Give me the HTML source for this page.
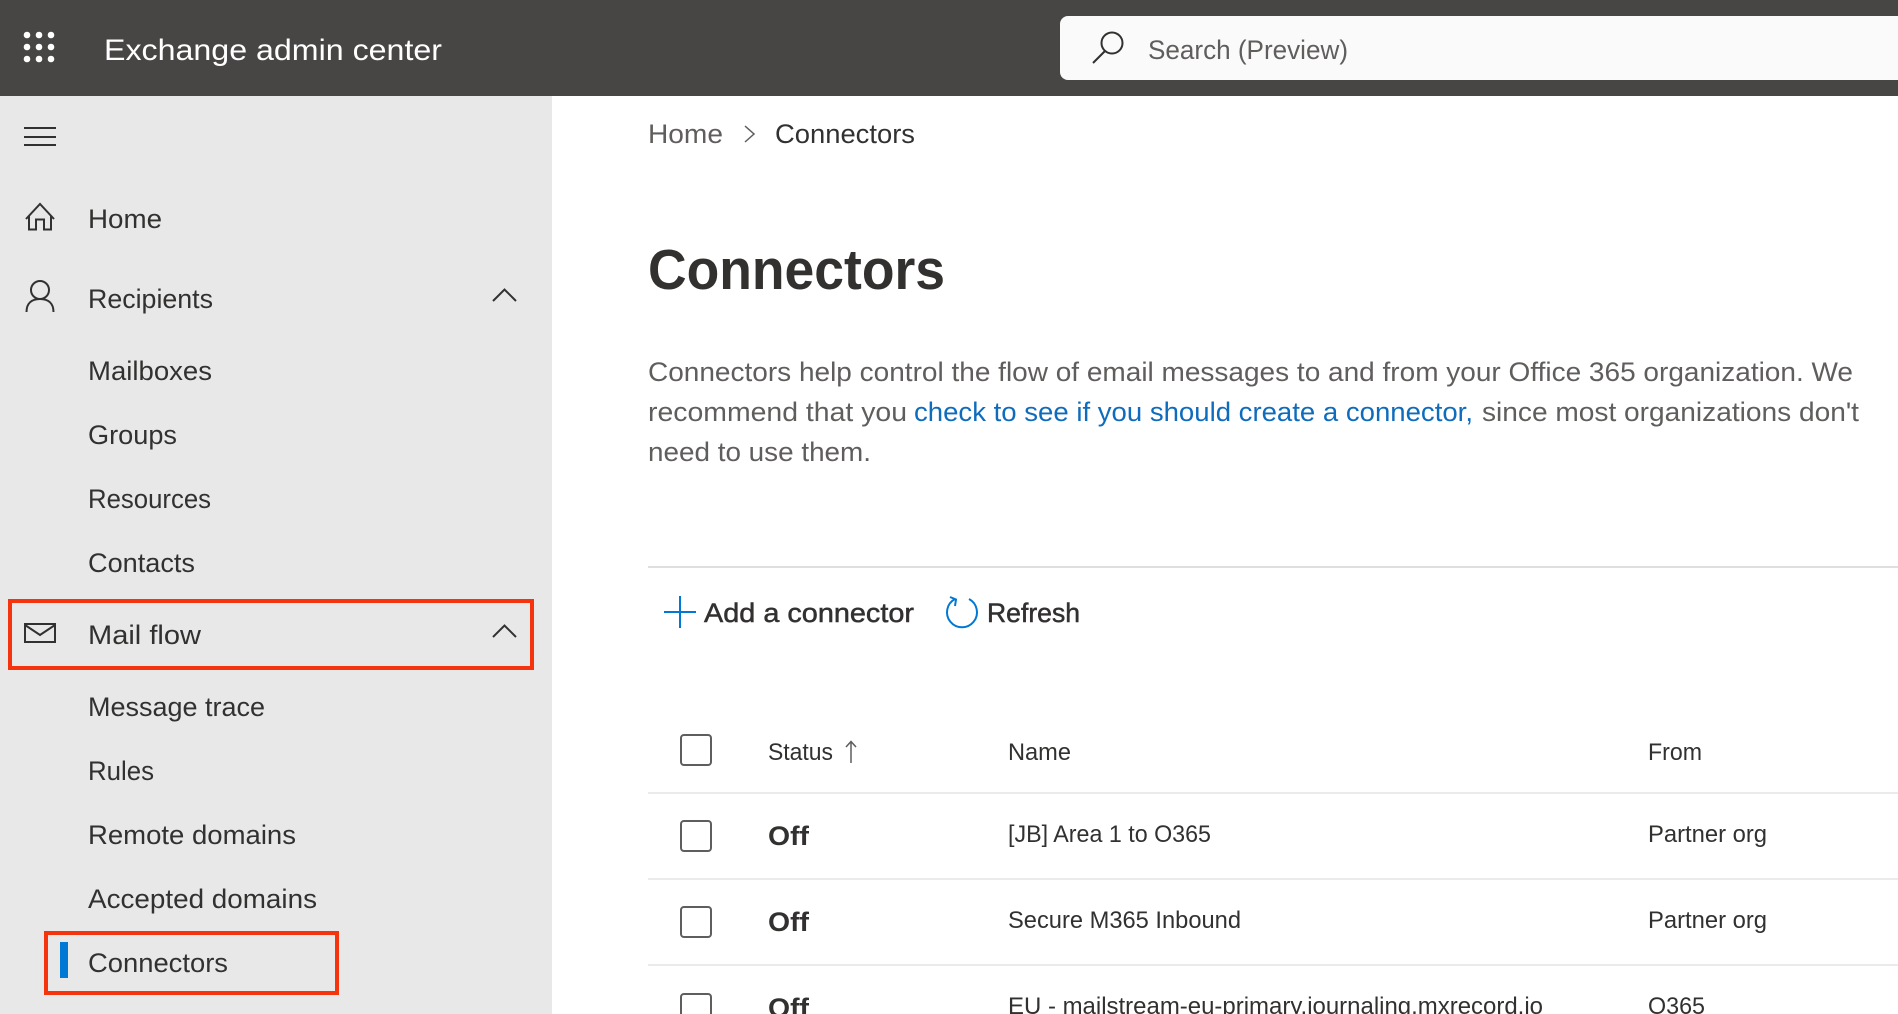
<!DOCTYPE html>
<html lang="en"><head><meta charset="utf-8"><title>Exchange admin center</title>
<style>
html,body{margin:0;padding:0;background:#fff;width:1898px;height:1014px;overflow:hidden}
svg{display:block;overflow:hidden}
text{font-family:"Liberation Sans",sans-serif;fill:#323130}
.n{font-size:27px}
.t{font-size:24px}
.s{font-size:27px;stroke:#323130;stroke-width:.5px}
.p{font-size:27px;fill:#605e5c}
.i{fill:none;stroke:#323130;stroke-width:2}
</style></head><body>
<svg width="1898" height="1014" viewBox="0 0 1898 1014" xmlns="http://www.w3.org/2000/svg">
<rect width="1898" height="1014" fill="#fff"/>
<rect width="552" height="918" y="96" fill="#e8e8e8"/>
<rect width="1898" height="96" fill="#484644"/>
<g fill="#fff"><circle cx="27" cy="35" r="3.3"/><circle cx="39" cy="35" r="3.3"/><circle cx="51" cy="35" r="3.3"/><circle cx="27" cy="47" r="3.3"/><circle cx="39" cy="47" r="3.3"/><circle cx="51" cy="47" r="3.3"/><circle cx="27" cy="59" r="3.3"/><circle cx="39" cy="59" r="3.3"/><circle cx="51" cy="59" r="3.3"/></g>
<text x="104" y="60" font-size="30" style="fill:#fff" textLength="338" lengthAdjust="spacingAndGlyphs">Exchange admin center</text>
<path d="M1068 16H1898V80H1068a8 8 0 0 1-8-8V24a8 8 0 0 1 8-8z" fill="#fafafa"/>
<circle cx="1112" cy="43" r="10.500" class="i"/><path d="M1105 51L1093 63" class="i"/>
<text x="1148" y="59" font-size="27" style="fill:#605e5c" textLength="200" lengthAdjust="spacingAndGlyphs">Search (Preview)</text>

<path d="M24 128H56M24 137H56M24 145H56" class="i"/>
<path d="M26 219L40 204L54 219M29 216V229.5H36V219.5H44V229.5H51V216" class="i"/>
<circle cx="40" cy="290" r="9" class="i"/><path d="M26.5 312C26.5 303 32 299 40 299C48 299 53.500 303 53.500 312" class="i"/>
<path d="M493 301L504.500 289.500L516 301" class="i"/>
<rect x="25" y="624" width="30" height="18" class="i"/><path d="M25 625L40 635L55 625" class="i"/>
<path d="M493 637L504.500 625.500L516 637" class="i"/>

<text class="n" x="88" y="228" textLength="74" lengthAdjust="spacingAndGlyphs">Home</text>
<text class="n" x="88" y="308" textLength="125" lengthAdjust="spacingAndGlyphs">Recipients</text>
<text class="n" x="88" y="380" textLength="124" lengthAdjust="spacingAndGlyphs">Mailboxes</text>
<text class="n" x="88" y="444" textLength="89" lengthAdjust="spacingAndGlyphs">Groups</text>
<text class="n" x="88" y="508" textLength="123" lengthAdjust="spacingAndGlyphs">Resources</text>
<text class="n" x="88" y="572" textLength="107" lengthAdjust="spacingAndGlyphs">Contacts</text>
<text class="n" x="88" y="644" textLength="113" lengthAdjust="spacingAndGlyphs">Mail flow</text>
<text class="n" x="88" y="716" textLength="177" lengthAdjust="spacingAndGlyphs">Message trace</text>
<text class="n" x="88" y="780" textLength="66" lengthAdjust="spacingAndGlyphs">Rules</text>
<text class="n" x="88" y="844" textLength="208" lengthAdjust="spacingAndGlyphs">Remote domains</text>
<text class="n" x="88" y="908" textLength="229" lengthAdjust="spacingAndGlyphs">Accepted domains</text>
<text class="n" x="88" y="972" textLength="140" lengthAdjust="spacingAndGlyphs">Connectors</text>

<rect x="10" y="601" width="522" height="67" fill="none" stroke="#f5330c" stroke-width="4"/>
<rect x="46" y="933" width="291" height="60" fill="none" stroke="#f5330c" stroke-width="4"/>
<rect x="60" y="942" width="8" height="36" fill="#0078d4"/>

<text x="648" y="143" font-size="27" style="fill:#605e5c" textLength="75" lengthAdjust="spacingAndGlyphs">Home</text>
<path d="M745 126L754 134L745 142" fill="none" stroke="#605e5c" stroke-width="1.500"/>
<text class="n" x="775" y="143" textLength="140" lengthAdjust="spacingAndGlyphs">Connectors</text>
<text x="648" y="289" font-size="57" font-weight="700" textLength="297" lengthAdjust="spacingAndGlyphs">Connectors</text>

<text class="p" x="648" y="381" textLength="1205" lengthAdjust="spacingAndGlyphs">Connectors help control the flow of email messages to and from your Office 365 organization. We</text>
<text class="p" x="648" y="421" textLength="259" lengthAdjust="spacingAndGlyphs">recommend that you</text>
<text class="p" x="914" y="421" style="fill:#0f6cbd" textLength="559" lengthAdjust="spacingAndGlyphs">check to see if you should create a connector,</text>
<text class="p" x="1482" y="421" textLength="377" lengthAdjust="spacingAndGlyphs">since most organizations don't</text>
<text class="p" x="648" y="461" textLength="223" lengthAdjust="spacingAndGlyphs">need to use them.</text>

<rect x="648" y="566" width="1250" height="2" fill="#e1dfdd"/>
<path d="M664 612H696M680 596V628" fill="none" stroke="#0078d4" stroke-width="2"/>
<text class="s" x="704" y="622" textLength="210" lengthAdjust="spacingAndGlyphs">Add a connector</text>
<path d="M969 599A15 15 0 1 1 955 599" fill="none" stroke="#0078d4" stroke-width="2"/>
<path d="M950 597L956 599.500L955 606" fill="none" stroke="#0078d4" stroke-width="2"/>
<text class="s" x="987" y="622" textLength="93" lengthAdjust="spacingAndGlyphs">Refresh</text>

<g fill="none" stroke="#605e5c" stroke-width="2">
<rect x="681" y="735" width="30" height="30" rx="3"/>
<rect x="681" y="821" width="30" height="30" rx="3"/>
<rect x="681" y="907" width="30" height="30" rx="3"/>
<path d="M681 1020V997a3 3 0 0 1 3-3H708a3 3 0 0 1 3 3V1020"/>
</g>
<text class="t" x="768" y="760" textLength="65" lengthAdjust="spacingAndGlyphs">Status</text>
<path d="M851 763V742M846 747L851 741.500L856 747" fill="none" stroke="#605e5c" stroke-width="1.500"/>
<text class="t" x="1008" y="760" textLength="63" lengthAdjust="spacingAndGlyphs">Name</text>
<text class="t" x="1648" y="760" textLength="54" lengthAdjust="spacingAndGlyphs">From</text>
<g fill="#edebe9"><rect x="648" y="792" width="1250" height="2"/><rect x="648" y="878" width="1250" height="2"/><rect x="648" y="964" width="1250" height="2"/></g>

<text x="768" y="845" font-size="27" font-weight="700" textLength="41" lengthAdjust="spacingAndGlyphs">Off</text>
<text class="t" x="1008" y="842" textLength="203" lengthAdjust="spacingAndGlyphs">[JB] Area 1 to O365</text>
<text class="t" x="1648" y="842" textLength="119" lengthAdjust="spacingAndGlyphs">Partner org</text>
<text x="768" y="931" font-size="27" font-weight="700" textLength="41" lengthAdjust="spacingAndGlyphs">Off</text>
<text class="t" x="1008" y="928" textLength="233" lengthAdjust="spacingAndGlyphs">Secure M365 Inbound</text>
<text class="t" x="1648" y="928" textLength="119" lengthAdjust="spacingAndGlyphs">Partner org</text>
<text x="768" y="1017" font-size="27" font-weight="700" textLength="41" lengthAdjust="spacingAndGlyphs">Off</text>
<text class="t" x="1008" y="1014" textLength="535" lengthAdjust="spacingAndGlyphs">EU - mailstream-eu-primary.journaling.mxrecord.io</text>
<text class="t" x="1648" y="1014" textLength="57" lengthAdjust="spacingAndGlyphs">O365</text>
</svg>
</body></html>
